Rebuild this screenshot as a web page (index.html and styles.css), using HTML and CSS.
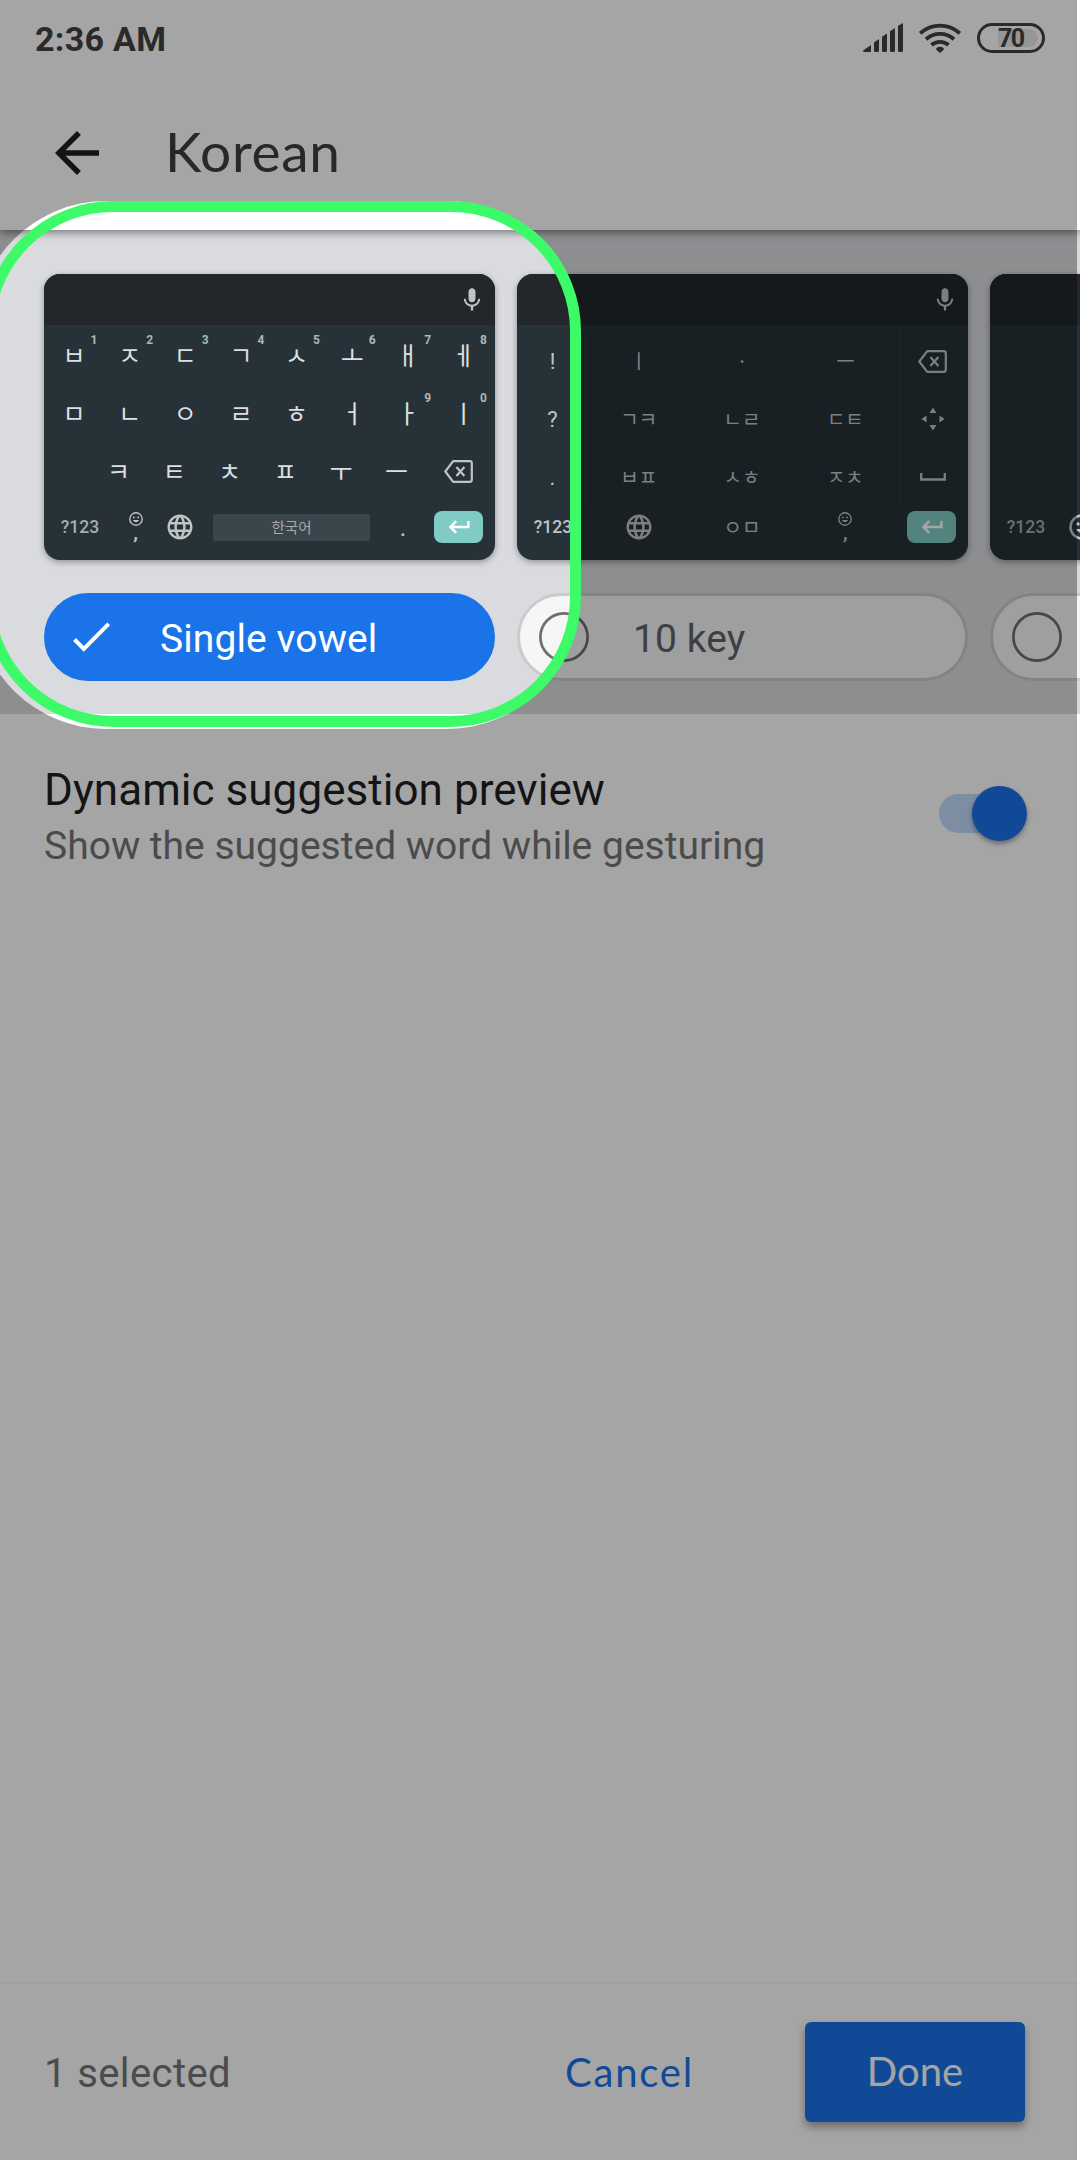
FILE: index.html
```html
<!DOCTYPE html>
<html lang="en">
<head>
<meta charset="utf-8">
<title>Korean</title>
<link rel="stylesheet" href="styles.css">
</head>
<body>
<svg class="defs" width="0" height="0" aria-hidden="true">
  <symbol id="mic" viewBox="0 0 24 24"><path d="M12 14c1.66 0 2.99-1.34 2.99-3L15 5c0-1.66-1.34-3-3-3S9 3.34 9 5v6c0 1.66 1.34 3 3 3zm5.3-3c0 3-2.54 5.1-5.3 5.1S6.7 14 6.7 11H5c0 3.41 2.72 6.23 6 6.72V21h2v-3.28c3.28-.48 6-3.3 6-6.72h-1.7z"/></symbol>
  <symbol id="globe" viewBox="0 0 24 24"><path d="M11.99 2C6.47 2 2 6.48 2 12s4.47 10 9.99 10C17.52 22 22 17.52 22 12S17.52 2 11.99 2zm6.93 6h-2.95c-.32-1.25-.78-2.45-1.38-3.56 1.84.63 3.37 1.91 4.33 3.56zM12 4.04c.83 1.2 1.48 2.53 1.91 3.96h-3.82c.43-1.43 1.08-2.76 1.91-3.96zM4.26 14C4.1 13.36 4 12.69 4 12s.1-1.36.26-2h3.38c-.08.66-.14 1.32-.14 2 0 .68.06 1.34.14 2H4.26zm.82 2h2.95c.32 1.25.78 2.45 1.38 3.56-1.84-.63-3.37-1.9-4.33-3.56zm2.95-8H5.08c.96-1.66 2.49-2.93 4.33-3.56C8.81 5.55 8.35 6.75 8.03 8zM12 19.96c-.83-1.2-1.48-2.53-1.91-3.96h3.82c-.43 1.43-1.08 2.76-1.91 3.96zM14.34 14H9.66c-.09-.66-.16-1.32-.16-2 0-.68.07-1.35.16-2h4.68c.09.65.16 1.32.16 2 0 .68-.07 1.34-.16 2zm.25 5.56c.6-1.11 1.06-2.31 1.38-3.56h2.95c-.96 1.65-2.49 2.93-4.33 3.56zM16.36 14c.08-.66.14-1.32.14-2 0-.68-.06-1.34-.14-2h3.38c.16.64.26 1.31.26 2s-.1 1.36-.26 2h-3.38z"/></symbol>
  <symbol id="smile" viewBox="0 0 24 24"><circle cx="12" cy="12" r="10.6" fill="none" stroke="currentColor" stroke-width="2.4"/><circle cx="8.3" cy="9.3" r="1.6"/><circle cx="15.7" cy="9.3" r="1.6"/><path d="M6.6 13.8a5.8 5.8 0 0 0 10.8 0z"/></symbol>
  <symbol id="backspace" viewBox="0 0 29 23"><path d="M9.2 1.2h16.6a2 2 0 0 1 2 2v16.6a2 2 0 0 1-2 2H9.2L1.3 11.5zM12.4 7l8 9M20.400 7l-8 9" fill="none" stroke="currentColor" stroke-width="2.2" stroke-linejoin="round"/></symbol>
  <symbol id="enter" viewBox="0 0 22 14"><path d="M20.4 1v6H3M8.2 1.2L2.4 7l5.8 5.8" fill="none" stroke="currentColor" stroke-width="2.5"/></symbol>
</svg>
<div class="screen">
  <div class="status">
    <span class="time">2:36 AM</span>
    <div class="status-icons">
      <svg width="40" height="30" viewBox="0 0 40 30"><path d="M0 27.500L8 22v7H1.500Q0 29 0 27.500zM11 19.500L16 16v11.500q0 1.500-1.500 1.500h-2q-1.500 0-1.500-1.500zM19 13.800L24 10.500v17q0 1.500-1.500 1.500h-2q-1.500 0-1.500-1.500zM27 8.300L32 5v22.500q0 1.500-1.500 1.500h-2q-1.500 0-1.500-1.500zM35 2.800L40 0v27.500q0 1.500-1.500 1.500h-2q-1.500 0-1.500-1.500z"/></svg>
      <svg class="wifi" width="42" height="30" viewBox="0 0 42 30"><g fill="none" stroke="currentColor" stroke-width="3.900"><path d="M1.300 10.300a29 29 0 0 1 39.400 0M7 16.200a21 21 0 0 1 28 0M12.500 22a13 13 0 0 1 17 0"/></g><path d="M17.100 26.500q0-2.800 3.900-2.800t3.900 2.800L21 30z"/></svg>
      <div class="battery"><div class="battery-level">70</div></div>
    </div>
  </div>
  <header class="header">
    <svg width="66" height="66" viewBox="0 0 24 24"><path d="M20 11H7.830l5.590-5.590L12 4l-8 8 8 8 1.410-1.410L7.830 13H20v-2z"/></svg>
    <h1 class="title">Korean</h1>
  </header>
  <section class="layouts">
    <div class="layout">
      <div class="keyboard">
        <div class="suggest"><svg width="28" height="28"><use href="#mic"/></svg></div>
        <div class="keys">
          <div class="row"><span class="key">ㅂ<sup>1</sup></span><span class="key">ㅈ<sup>2</sup></span><span class="key">ㄷ<sup>3</sup></span><span class="key">ㄱ<sup>4</sup></span><span class="key">ㅅ<sup>5</sup></span><span class="key">ㅗ<sup>6</sup></span><span class="key">ㅐ<sup>7</sup></span><span class="key">ㅔ<sup>8</sup></span></div>
          <div class="row"><span class="key">ㅁ</span><span class="key">ㄴ</span><span class="key">ㅇ</span><span class="key">ㄹ</span><span class="key">ㅎ</span><span class="key">ㅓ</span><span class="key">ㅏ<sup>9</sup></span><span class="key">ㅣ<sup>0</sup></span></div>
          <div class="row third"><span class="key">ㅋ</span><span class="key">ㅌ</span><span class="key">ㅊ</span><span class="key">ㅍ</span><span class="key">ㅜ</span><span class="key">ㅡ</span><span class="key wide"><svg width="29" height="23"><use href="#backspace"/></svg></span></div>
          <div class="row bottom">
            <span class="sym">?123</span>
            <span class="emoji"><svg width="14" height="14"><use href="#smile"/></svg><b>,</b></span>
            <span class="lang"><svg width="30" height="30"><use href="#globe"/></svg></span>
            <span class="space">한국어</span>
            <span class="dot">.</span>
            <span class="enter"><svg width="22" height="14"><use href="#enter"/></svg></span>
          </div>
        </div>
      </div>
      <div class="chip selected">
        <svg width="50" height="50" viewBox="0 0 50 50"><path d="M8.500 27.500l9.300 9.300L42.700 11.900" fill="none" stroke="currentColor" stroke-width="4"/></svg>
        <span>Single vowel</span>
      </div>
    </div>
    <div class="layout">
      <div class="keyboard">
        <div class="suggest"><svg width="28" height="28"><use href="#mic"/></svg></div>
        <div class="pad">
          <div class="side"><span>!</span><span>?</span><span>.</span></div>
          <div class="grid"><span>ㅣ</span><span>·</span><span>ㅡ</span><span>ㄱㅋ</span><span>ㄴㄹ</span><span>ㄷㅌ</span><span>ㅂㅍ</span><span>ㅅㅎ</span><span>ㅈㅊ</span></div>
          <div class="side tools">
            <span><svg width="29" height="23"><use href="#backspace"/></svg></span>
            <span><svg width="24" height="24" viewBox="0 0 24 24"><path d="M12 .5l3.500 5.500h-7zM12 23.500l3.500-5.500h-7zM.5 12l5-3.500v7zM23.500 12l-5-3.500v7z"/></svg></span>
            <span><svg width="26" height="8" viewBox="0 0 26 8"><path d="M1.200 0v6.500h23.600V0" fill="none" stroke="currentColor" stroke-width="2.300"/></svg></span>
          </div>
        </div>
        <div class="pad-bottom">
          <span class="sym light">?123</span>
          <div class="grid"><span><svg width="30" height="30"><use href="#globe"/></svg></span><span>ㅇㅁ</span><span class="emoji"><svg width="14" height="14"><use href="#smile"/></svg><b>,</b></span></div>
          <span class="enter"><svg width="22" height="14"><use href="#enter"/></svg></span>
        </div>
      </div>
      <div class="chip">
        <svg width="50" height="50" viewBox="0 0 50 50"><circle cx="25" cy="25" r="23.600" fill="none" stroke="currentColor" stroke-width="2.700"/></svg>
        <span>10 key</span>
      </div>
    </div>
    <div class="layout">
      <div class="keyboard">
        <div class="suggest"></div>
        <div class="row bottom last">
          <span class="sym">?123</span>
          <svg class="smile-key" width="26" height="26"><use href="#smile"/></svg>
        </div>
      </div>
      <div class="chip">
        <svg width="50" height="50" viewBox="0 0 50 50"><circle cx="25" cy="25" r="23.600" fill="none" stroke="currentColor" stroke-width="2.700"/></svg>
      </div>
    </div>
  </section>
  <section class="setting">
    <div>
      <div class="setting-title">Dynamic suggestion preview</div>
      <div class="setting-sub">Show the suggested word while gesturing</div>
    </div>
    <div class="toggle"><div class="thumb"></div></div>
  </section>
  <footer class="footer">
    <span class="count">1 selected</span>
    <span class="cancel">Cancel</span>
    <span class="done">Done</span>
  </footer>
  <div class="scrim"><div class="hole"></div></div>
  <div class="ring"></div>
</div>
</body>
</html>
```
FILE: styles.css
```css
* { box-sizing: border-box; }
body { margin: 0; background: #fff; }
svg { display: block; flex: none; fill: currentColor; }
.defs { position: absolute; }
.screen {
  position: relative;
  display: flex;
  flex-direction: column;
  width: 1080px;
  height: 2160px;
  overflow: hidden;
  background: #fff;
  font-family: Roboto, "Noto Sans CJK KR", sans-serif;
}

.status {
  position: relative;
  z-index: 2;
  display: flex;
  justify-content: space-between;
  align-items: center;
  height: 76px;
  padding: 0 35px;
  background: #fff;
  color: #414141;
}
.time { font-size: 34px; font-weight: 700; line-height: 40px; margin-top: 2px; letter-spacing: .3px; }
.status-icons { display: flex; align-items: center; }
.wifi { margin: 0 16px; }
.battery {
  display: flex;
  width: 68px;
  height: 30px;
  padding: 3px 4px 3px 18px;
  border: 3px solid #414141;
  border-radius: 15px;
}
.battery-level {
  width: 40px;
  height: 18px;
  border-radius: 0 9px 9px 0;
  background: #e8e8e8;
  font-size: 25px;
  font-weight: 700;
  line-height: 19px;
  letter-spacing: -1.500px;
}

.header {
  position: relative;
  z-index: 1;
  display: flex;
  align-items: center;
  gap: 55px;
  height: 154px;
  padding-left: 44px;
  background: #fff;
  box-shadow: 0 2px 9px rgba(0, 0, 0, .5);
  color: #1f1f1f;
}
.title { margin: 0 0 4px; font: 400 55px/66px Lato, sans-serif; letter-spacing: .7px; color: #3c4043; }

.layouts {
  display: flex;
  gap: 22px;
  height: 484px;
  padding: 44px 44px 33px;
  background: #dadbdf;
}
.layout { display: flex; flex: none; flex-direction: column; gap: 33px; width: 451px; }
.keyboard {
  display: flex;
  flex-direction: column;
  height: 286px;
  border-radius: 16px;
  overflow: hidden;
  background: #263238;
  box-shadow: 0 2px 6px rgba(0, 0, 0, .35);
  color: #c1c4c5;
}
.suggest { display: flex; justify-content: flex-end; height: 51px; padding: 12px 9px 0; background: #22272b; }
.keys { padding: 1px 3px 0; }
.row { display: flex; height: 58px; }
.key {
  position: relative;
  display: flex;
  align-items: center;
  justify-content: center;
  width: 55.67px;
  padding: 0 1.500px 2px 0;
  font: 400 25px/56px "Noto Sans CJK KR", sans-serif;
  color: #dcdedf;
}
.key sup {
  position: absolute;
  left: 42px;
  top: 7px;
  width: 10px;
  font: 700 12px/14px Roboto, sans-serif;
  text-align: center;
  color: #b0b5b7;
}
.third { padding-left: 44.5px; }
.wide { width: 67px; padding: 0; color: #c1c4c5; }
.bottom { align-items: center; height: 54px; }
.sym { width: 66px; font-size: 17.500px; font-weight: 500; text-align: center; color: #a8adaf; }
.light { color: #c1c4c5; }
.emoji { display: flex; flex-direction: column; align-items: center; width: 45px; height: 30px; }
.emoji b { font-size: 21px; font-weight: 500; line-height: 16px; margin-top: -2px; }
.lang { display: flex; justify-content: center; width: 43px; }
.space {
  width: 157px;
  height: 27px;
  margin-left: 12px;
  border-radius: 2px;
  background: #3b464c;
  font: 400 14.500px/26px "Noto Sans CJK KR", sans-serif;
  text-align: center;
  color: #a4aaac;
}
.dot { width: 64px; padding-left: 2px; font-size: 21px; font-weight: 500; text-align: center; margin-top: 3px; }
.enter {
  display: flex;
  align-items: center;
  justify-content: center;
  width: 49px;
  height: 32px;
  border-radius: 8px;
  background: #80cbc4;
  color: #fff;
}

.pad { display: flex; height: 181px; padding-top: 7px; }
.side { display: grid; grid-template-rows: repeat(3, 58px); width: 68px; font-size: 22px; }
.tools { width: 66px; padding-right: 3px; }
.side span, .grid span { display: flex; align-items: center; justify-content: center; }
.grid {
  display: grid;
  grid-template-columns: repeat(3, 1fr);
  width: 316px;
  padding-right: 2px;
  border: solid #2d393f;
  border-width: 0 2px;
  font: 400 20px/1 "Noto Sans CJK KR", sans-serif;
}
.side:first-child span { padding-left: 3px; }
.pad-bottom { display: flex; align-items: center; height: 42px; }
.pad-bottom .sym { width: 72px; margin-right: -4px; }
.pad-bottom .grid { border-color: transparent; }
.pad-bottom .grid .emoji { width: auto; justify-content: flex-start; font-family: Roboto, sans-serif; }
.pad-bottom .enter { margin-left: 6px; }
.last { margin-top: 175px; padding-left: 3px; }
.smile-key { margin-left: 10px; }

.chip {
  display: flex;
  align-items: center;
  gap: 44px;
  height: 88px;
  padding: 0 19px;
  border: 3px solid #cbcbcc;
  border-radius: 44px;
  background: #f6f6f6;
  color: #5f6368;
  font-size: 39px;
  white-space: nowrap;
}
.chip svg { color: #6e6e6e; }
.chip span { padding-top: 3px; letter-spacing: .1px; }
.selected { border-color: #1a73e8; background: #1a73e8; color: #fff; }
.selected svg { color: #fff; }

.setting { display: flex; justify-content: space-between; flex: 1; padding: 50px 53px 0 44px; }
.setting-title { font-size: 44px; line-height: 52px; color: #1f1f1f; letter-spacing: .05px; }
.setting-sub { margin-top: 4px; font-size: 39px; line-height: 52px; color: #757575; }
.toggle {
  display: flex;
  align-items: center;
  justify-content: flex-end;
  width: 88px;
  height: 39px;
  margin-top: 30px;
  border-radius: 20px;
  background: linear-gradient(90deg, #c2dafb 72px, transparent 72px);
}
.thumb { width: 55px; height: 55px; border-radius: 50%; background: #1a73e8; box-shadow: 0 3px 5px rgba(0, 0, 0, .35); }

.footer { display: flex; align-items: center; height: 178px; padding: 0 55px 0 44px; border-top: 2px solid #f8f8f8; }
.count { flex: 1; padding-top: 3px; font-size: 40px; color: #757575; letter-spacing: .4px; }
.cancel { width: 240px; font: 400 40px/48px Lato, sans-serif; letter-spacing: 1.800px; color: #1a73e8; }
.done {
  width: 220px;
  height: 100px;
  border-radius: 6px;
  background: #1a73e8;
  box-shadow: 0 5px 8px rgba(0, 0, 0, .35);
  font: 400 40px/98px Lato, sans-serif;
  text-align: center;
  color: #fff;
}

.scrim { position: absolute; z-index: 2; top: 0; left: 0; width: 1077px; height: 2160px; overflow: hidden; }
.hole {
  position: absolute;
  top: 201px;
  left: -24px;
  width: 601px;
  height: 528px;
  border-radius: 130px;
  box-shadow: 0 0 0 2200px rgba(0, 0, 0, .352);
}
.ring {
  position: absolute;
  z-index: 3;
  top: 201px;
  left: -17px;
  width: 598px;
  height: 526px;
  border: 11px solid #3dfa68;
  border-radius: 130px;
}
```
